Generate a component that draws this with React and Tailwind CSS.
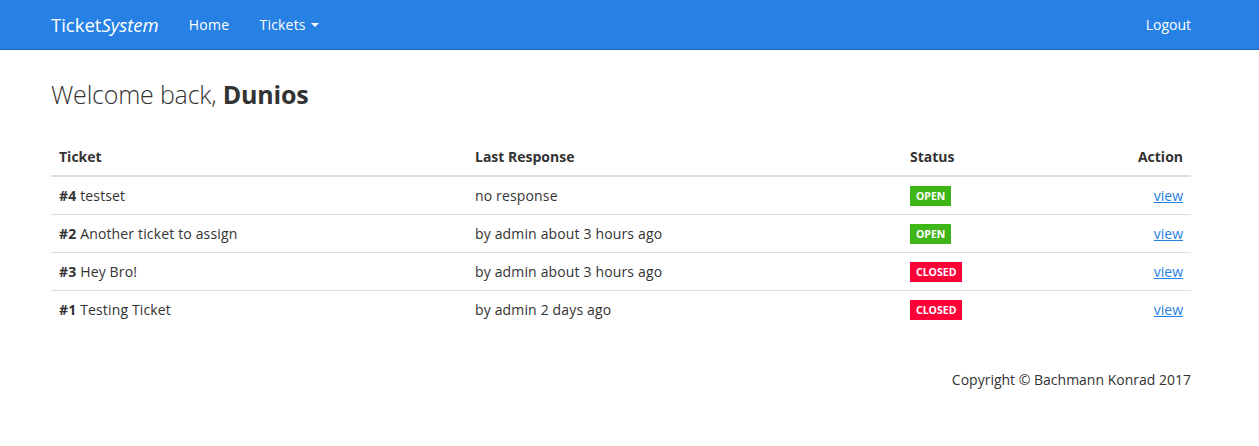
export default function App() {
  const rows = [
    { id: 4, title: "testset", resp: "no response", open: true },
    { id: 2, title: "Another ticket to assign", resp: "by admin about 3 hours ago", open: true },
    { id: 3, title: "Hey Bro!", resp: "by admin about 3 hours ago", open: false },
    { id: 1, title: "Testing Ticket", resp: "by admin 2 days ago", open: false },
  ];
  return (
    <div className="min-h-[446px] bg-white text-[#333333] text-[14px]" style={{ fontFamily: '"Open Sans", "Noto Sans", sans-serif' }}>
      <nav className="h-[50px] bg-[#2780e3] border-b border-[#1967be] text-white">
        <div className="flex h-[49px] items-center pl-[51px] pr-[68px]">
          <div className="text-[18.5px] pr-[15px]">
            Ticket<span className="italic">System</span>
          </div>
          <a className="px-[15px] text-[14px] tracking-[0.3px]">Home</a>
          <a className="px-[15px] text-[14px] tracking-[0.2px] flex items-center">
            Tickets
            <span className="ml-[5px] inline-block w-0 h-0 border-l-[4px] border-r-[4px] border-t-[4px] border-l-transparent border-r-transparent border-t-white"></span>
          </a>
          <div className="ml-auto text-[14px]">Logout</div>
        </div>
      </nav>
      <div className="pl-[51px] pr-[68px]">
        <h3 className="mt-[29px] text-[25px] leading-[30px] font-light tracking-[-0.2px]">
          Welcome back, <span className="font-bold">Dunios</span>
        </h3>
        <table className="mt-[29px] w-full border-collapse">
          <colgroup>
            <col className="w-[416px]" />
            <col className="w-[435px]" />
            <col />
            <col />
          </colgroup>
          <thead>
            <tr className="border-b-2 border-[#dddddd]">
              <th className="text-left font-bold px-[8px] py-[8px] leading-[21px]">Ticket</th>
              <th className="text-left font-bold px-[8px] py-[8px] leading-[21px]">Last Response</th>
              <th className="text-left font-bold px-[8px] py-[8px] leading-[21px]">Status</th>
              <th className="text-right font-bold px-[8px] py-[8px] leading-[21px]">Action</th>
            </tr>
          </thead>
          <tbody>
            {rows.map((r, i) => (
              <tr key={r.id} className={i > 0 ? "border-t border-[#dddddd]" : ""}>
                <td className="px-[8px] py-[8px] h-[37px] leading-[21px] tracking-[0.15px]"><span className="font-bold">#{r.id}</span> {r.title}</td>
                <td className="px-[8px] py-[8px] h-[37px] leading-[21px] tracking-[0.15px]">{r.resp}</td>
                <td className="px-[8px] py-[8px] h-[37px] leading-[21px]">
                  <span className={"mt-[1px] flex items-center w-fit h-[20px] px-[6px] text-white text-[10.5px] font-bold leading-none " + (r.open ? "bg-[#3fb618]" : "bg-[#ff0039]")}>
                    {r.open ? "OPEN" : "CLOSED"}
                  </span>
                </td>
                <td className="px-[8px] py-[8px] h-[37px] leading-[21px] text-right">
                  <a className="text-[#2780e3] underline">view</a>
                </td>
              </tr>
            ))}
          </tbody>
        </table>
        <div className="mt-[41px] text-right leading-[21px]">Copyright © Bachmann Konrad 2017</div>
      </div>
    </div>
  );
}
